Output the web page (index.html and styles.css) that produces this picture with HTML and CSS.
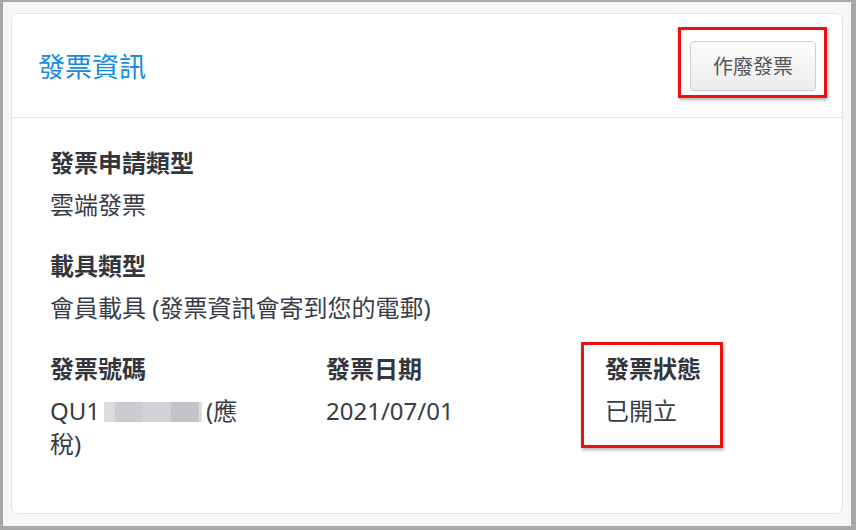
FILE: index.html
```html
<!DOCTYPE html>
<html lang="zh-Hant">
<head>
    <meta charset="UTF-8">
    <meta name="viewport" content="width=device-width, initial-scale=1.0">
    <title>發票資訊</title>
    <link rel="stylesheet" href="styles.css">
</head>
<body>
    <div class="frame">
        <div class="card">
            <!-- Encabezado con título y botón -->
            <div class="card-header">
                <h2 class="card-title">發票資訊</h2>
                <button class="btn-void">作廢發票</button>
            </div>

            <div class="card-body">
                <div class="field">
                    <div class="label">發票申請類型</div>
                    <div class="value">雲端發票</div>
                </div>
                <div class="field">
                    <div class="label">載具類型</div>
                    <div class="value">會員載具 (發票資訊會寄到您的電郵)</div>
                </div>
                <div class="field-row">
                    <div class="field">
                        <div class="label">發票號碼</div>
                        <div class="value">QU1<span class="mask"></span>(應稅)</div>
                    </div>
                    <div class="field">
                        <div class="label">發票日期</div>
                        <div class="value">2021/07/01</div>
                    </div>
                    <div class="field">
                        <div class="label">發票狀態</div>
                        <div class="value">已開立</div>
                    </div>
                </div>
            </div>
        </div>

        <!-- Marcas rojas de anotación -->
        <div class="mark mark-btn"></div>
        <div class="mark mark-status"></div>
    </div>
</body>
</html>
```

FILE: styles.css
```css
/* Estilo general */
html, body {
    margin: 0;
    height: 100%;
}

body {
    font-family: "Noto Sans", "Noto Sans CJK TC", sans-serif;
    color: #383c45;
}

.frame {
    position: relative;
    box-sizing: border-box;
    height: 530px;
    background-color: #f6f6f6;
    border-style: solid;
    border-color: #a8a8a8;
    border-width: 2px 5px 4px 3px;
    padding: 11px 8px 12px 8px;
}

.card {
    box-sizing: border-box;
    height: 100%;
    background-color: #fff;
    border: 1px solid #e3e3e3;
    border-radius: 7px;
}

.card-header {
    height: 103px;
    display: flex;
    align-items: center;
    justify-content: space-between;
    padding: 0 26px 0 26px;
    border-bottom: 1px solid #e4e4e4;
}

.card-title {
    margin: 0;
    font-size: 27px;
    font-weight: normal;
    line-height: 36px;
    color: #148be0;
    padding-top: 3px;
}

.btn-void {
    width: 126px;
    height: 50px;
    font-family: inherit;
    font-size: 20px;
    color: #555;
    background: linear-gradient(#fcfcfc, #ececec);
    border: 1px solid #cdcdcd;
    border-radius: 4px;
    box-shadow: 0 1px 1px rgba(0, 0, 0, 0.06);
}

.card-body {
    padding: 28px 38px 0 38px;
}

.field {
    margin-bottom: 28px;
}

.label {
    font-size: 24px;
    font-weight: bold;
    line-height: 33px;
    margin-bottom: 9px;
    color: #33363d;
}

.value {
    font-size: 24px;
    line-height: 33px;
}

.field-row {
    display: grid;
    grid-template-columns: 276px 279px 1fr;
}

.field-row .field {
    padding-right: 72px;
}

.mask {
    display: inline-block;
    width: 98px;
    height: 20px;
    margin: 0 4px;
    vertical-align: -2px;
    background: linear-gradient(to right,
        #dcdde0 0, #dcdde0 11px,
        #cbccd0 11px, #cbccd0 38px,
        #d2d3d6 38px, #d2d3d6 67px,
        #c2c3c7 67px, #c2c3c7 95px,
        #dcdde0 95px);
}

/* Marcas de anotación */
.mark {
    position: absolute;
    border: 3px solid #ee1111;
    box-shadow: 1px 2px 3px rgba(0, 0, 0, 0.3);
}

.mark-btn {
    left: 675px;
    top: 25px;
    width: 143px;
    height: 65px;
}

.mark-status {
    left: 578px;
    top: 340px;
    width: 136px;
    height: 100px;
}
```
